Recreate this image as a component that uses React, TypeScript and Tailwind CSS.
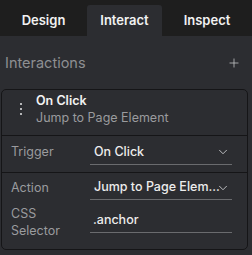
import { ChevronDown, Plus } from "lucide-react";

const font = { fontFamily: "Inter, 'Open Sans', sans-serif" };

export default function App() {
  return (
    <div className="w-[252px] h-[255px] bg-[#2c2d31] flex flex-col" style={font}>
      <div className="h-[36px] bg-[#1e1e1e] flex items-end text-[13px] font-semibold text-[#f2f2f2]">
        <div className="w-[87px] h-[31px] flex items-center justify-center">Design</div>
        <div className="w-[75px] h-[31px] flex items-center justify-center bg-[#2c2d31] rounded-t-[3px]">Interact</div>
        <div className="flex-1 h-[31px] flex items-center justify-center">Inspect</div>
      </div>

      <div className="flex items-center justify-between h-[53px] pl-[5px] pr-[11px]">
        <span className="text-[14.5px] text-[#8e8f92]">Interactions</span>
        <Plus size={14} strokeWidth={1.3} className="text-[#c9cacc]" />
      </div>

      <div className="mx-[1px] w-[247px] border border-[#151517] rounded-[5px] flex flex-col text-[12.5px]">
        <div className="flex items-center h-[46px] pb-[8px] border-b border-[#151517]">
          <div className="w-[34px] flex flex-col items-center gap-[3px] pl-[4px]">
            <span className="w-[2px] h-[2px] bg-[#b5b6b8]" />
            <span className="w-[2px] h-[2px] bg-[#b5b6b8]" />
            <span className="w-[2px] h-[2px] bg-[#b5b6b8]" />
          </div>
          <div className="flex flex-col leading-[17px]">
            <span className="font-semibold text-[#f2f2f2]">On Click</span>
            <span className="text-[#9a9b9e]">Jump to Page Element</span>
          </div>
        </div>

        <div className="flex items-center h-[37px] pb-[3px] pl-[9px] pr-[15px] border-b border-[#151517]">
          <div className="w-[79px] text-[#9a9b9e]">Trigger</div>
          <div className="flex-1 min-w-0 flex items-center h-[24px] border-b border-[#6a6b6e] pl-[4px] pr-[2px]">
            <span className="flex-1 min-w-0 text-[#ececec] font-medium">On Click</span>
            <ChevronDown size={14} strokeWidth={1.5} className="flex-shrink-0 text-[#cfd0d2]" />
          </div>
        </div>

        <div className="flex items-center h-[30px] pl-[9px] pr-[15px]">
          <div className="w-[79px] text-[#9a9b9e]">Action</div>
          <div className="flex-1 min-w-0 flex items-center h-[24px] border-b border-[#6a6b6e] pl-[4px] pr-[2px]">
            <span className="flex-1 min-w-0 whitespace-nowrap text-[#ececec] font-medium">Jump to Page Elem...</span>
            <ChevronDown size={14} strokeWidth={1.5} className="flex-shrink-0 text-[#cfd0d2]" />
          </div>
        </div>

        <div className="flex items-start pt-[2px] pb-[10px] pl-[9px] pr-[15px]">
          <div className="w-[79px] leading-[17px] text-[#9a9b9e]">
            CSS
            <br />
            Selector
          </div>
          <div className="flex-1 min-w-0 flex items-center h-[24px] mt-[4px] border-b border-[#6a6b6e] pl-[3px]">
            <span className="text-[#ececec] font-medium">.anchor</span>
          </div>
        </div>
      </div>
    </div>
  );
}
